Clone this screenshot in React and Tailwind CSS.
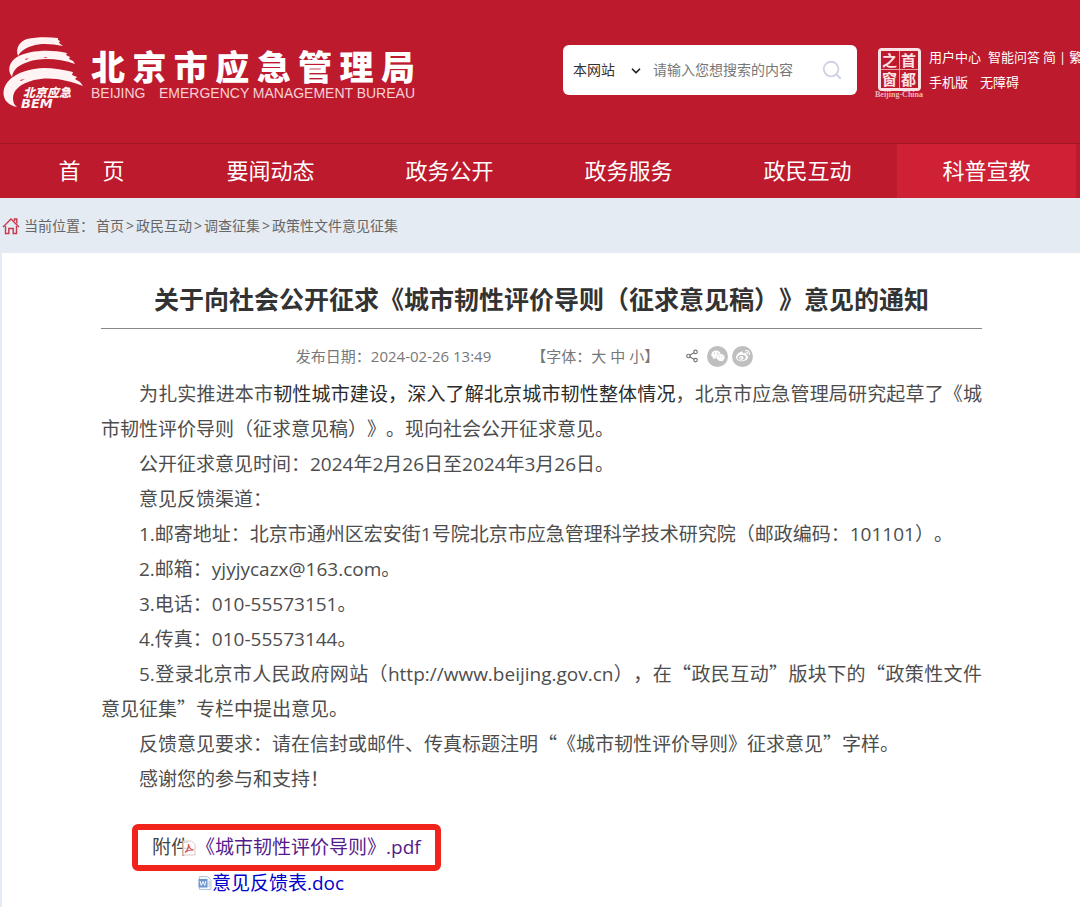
import { ChevronDown, Search, Share2 } from 'lucide-react';
import { FaWeibo, FaWeixin } from 'react-icons/fa6';

const siteName = ['北', '京', '市', '应', '急', '管', '理', '局'];

const navItems = [
  { label: '首\u3000页' },
  { label: '要闻动态' },
  { label: '政务公开' },
  { label: '政务服务' },
  { label: '政民互动' },
  { label: '科普宣教', active: true },
];

const crumbs = ['首页', '政民互动', '调查征集', '政策性文件意见征集'];

function BureauEmblem() {
  return (
    <svg className="h-[74px] w-20 shrink-0" viewBox="0 0 80 74" fill="#fff3f3" aria-hidden="true">
      {/* Temple of Heaven brush strokes */}
      <path d="M15 19C12 11 17 4 24 2c9-2 21-2 31-1l0 2 2 1-1 2 4 3c-11-2-22-3-31 0-7 2-11 5-14 10z" />
      <path d="M9 40C4 33 6 25 14 20c12-7 33-8 50-4l-1 2 4 2-1 2 4 2 2 3c-15-5-33-7-47-2C15 28 10 33 9 40z" />
      <path d="M14 70C3 68-1 60 1 52c4-13 20-20 39-21 11 0 21 2 30 4l-1 3 5 2-2 2 5 3 3 4c-15-6-33-10-49-6-15 4-21 11-21 18 0 4 1 7 4 9z" />
      <path d="M22 22l4-1-3 2zm20-2l3 1h-4zM17 43l5-1-4 2zm22-1l4 1-5 0z" fill="#bd1a2d" />
      <text x="20" y="60" fontSize="12" fontWeight="900" fontStyle="italic" fontFamily="Noto Sans CJK SC, sans-serif">
        北京应急
      </text>
      <text x="18" y="71" fontSize="13" fontWeight="700" fontStyle="italic" fontFamily="DejaVu Sans, sans-serif">
        BEM
      </text>
    </svg>
  );
}

function CapitalSeal() {
  return (
    <a href="#capital" className="flex w-12 shrink-0 flex-col items-center text-[#fbe3e5]">
      <span className="grid size-[43px] grid-cols-2 grid-rows-2 gap-px rounded-sm border-3 border-[#fbe3e5] bg-[#e9a0a8] font-['Noto_Sans_CJK_SC',sans-serif] text-[15px] leading-4 font-bold">
        {['之', '首', '窗', '都'].map((char) => (
          <span key={char} className="flex items-center justify-center bg-[#bd1a2d]">
            {char}
          </span>
        ))}
      </span>
      <span className="font-['Liberation_Serif',serif] text-[8px] leading-2 font-bold whitespace-nowrap text-[#f0b4ba]">
        Beijing-China
      </span>
    </a>
  );
}

function HomeIcon() {
  return (
    <svg className="mr-1 size-[18px] shrink-0" viewBox="0 0 18 18" fill="none" stroke="#c9384a" strokeWidth="1.4" aria-hidden="true">
      <path d="M1 10L9 2l8 8" />
      <path d="M3.5 9v7.5h3.3v-5h4.4v5h3.3V9" />
      <path d="M12.5 4V2h2.3v4.5" />
    </svg>
  );
}

function PdfIcon() {
  return (
    <svg className="h-4 w-3.5" viewBox="0 0 14 16" fill="none" aria-hidden="true">
      <path d="M1 1h8.5L13 4.500V15H1z" fill="#fff" fillOpacity="0.8" stroke="#d9c6c9" />
      <path d="M3 12.500c2-1.500 3.500-4.500 3.500-8.500.5 4 2 6 5 6-3-.5-5.500 0-8.500 2.500z" stroke="#e0555c" strokeWidth="1.300" />
    </svg>
  );
}

function DocIcon() {
  return (
    <svg className="h-4 w-3.5" viewBox="0 0 14 16" fill="none" aria-hidden="true">
      <path d="M1.500 1.500h8L13 5v9.500H1.500z" fill="#f4f8fd" stroke="#b5c7de" />
      <path d="M.5 4h9v8.500h-9z" fill="#6c94cf" />
      <path d="M2 6l1.300 4.500L5 6.500l1.700 4L8 6" stroke="#fff" />
      <path d="M10.500 7H12m-1.500 2H12m-1.500 2H12" stroke="#9db6d6" />
    </svg>
  );
}

/* Full-width Chinese quotation marks, kept from stretching the line box */
function Quoted({ children }) {
  return (
    <>
      <span className="font-['Noto_Sans_CJK_SC',sans-serif] leading-none">“</span>
      {children}
      <span className="font-['Noto_Sans_CJK_SC',sans-serif] leading-none">”</span>
    </>
  );
}

function SearchBox() {
  return (
    <form className="flex h-[50px] w-[294px] shrink-0 items-center rounded-md bg-white pr-3.5 pl-2.5 text-sm" role="search">
      <div className="relative w-20 shrink-0">
        <select aria-label="搜索范围" className="w-full appearance-none bg-transparent text-[#333] outline-none">
          <option>本网站</option>
        </select>
        <ChevronDown className="pointer-events-none absolute top-1 right-2.5 size-3.5 text-[#222]" strokeWidth={3} />
      </div>
      <input
        type="search"
        aria-label="搜索内容"
        placeholder="请输入您想搜索的内容"
        className="min-w-0 flex-1 bg-transparent outline-none placeholder:text-[#777]"
      />
      <button type="button" aria-label="搜索">
        <Search className="size-[22px] text-[#ced3e4]" />
      </button>
    </form>
  );
}

function Header() {
  return (
    <header className="bg-[#bd1a2d] text-white">
      <div className="flex h-[143px] items-start overflow-hidden">
        <a href="#home" className="mt-[37px] ml-[3px] flex shrink-0 gap-2" aria-label="北京市应急管理局">
          <BureauEmblem />
          <span className="mt-2.5 w-[324px]">
            <span className="flex justify-between font-['Noto_Sans_CJK_SC',sans-serif] text-[34px] leading-[38px] font-black">
              {siteName.map((char) => (
                <span key={char}>{char}</span>
              ))}
            </span>
            <span className="flex justify-between font-['Liberation_Sans',sans-serif] text-sm leading-4 text-[#f9d0d4]">
              <span className="mr-2.5">BEIJING</span>
              <span>EMERGENCY</span>
              <span>MANAGEMENT</span>
              <span>BUREAU</span>
            </span>
          </span>
        </a>
        <div className="mt-[45px] ml-auto flex shrink-0 pl-4">
          <SearchBox />
          <div className="mt-[3px] ml-[18px]">
            <CapitalSeal />
          </div>
          {/* Quick links run past the right edge on narrow windows */}
          <div className="ml-1.5 w-[151px] text-[13px] leading-[25px] whitespace-nowrap">
            <div className="flex">
              <a href="#user" className="mr-[7px]">用户中心</a>
              <a href="#qa" className="mr-[3px]">智能问答</a>
              <a href="#hans">简</a>
              <span className="mx-[3px]">|</span>
              <a href="#hant">繁</a>
            </div>
            <div className="flex gap-3">
              <a href="#mobile">手机版</a>
              <a href="#accessible">无障碍</a>
            </div>
          </div>
        </div>
      </div>
      <nav className="grid grid-cols-6 border-t border-[#a31626] pr-1 pl-0.5 text-center text-[22px] leading-[52px]" aria-label="主导航">
        {navItems.map((item) => (
          <a key={item.label} href="#nav" className={item.active ? 'bg-[#ce2136] pb-0.5' : 'pb-0.5'}>
            {item.label}
          </a>
        ))}
      </nav>
    </header>
  );
}

function Breadcrumb() {
  return (
    <nav className="flex h-[55px] items-center bg-[#e5ebf3] pl-0.5 text-sm text-[#666]" aria-label="当前位置">
      <HomeIcon />
      <span className="mr-0.5">当前位置：</span>
      <span>
        {crumbs.map((crumb, index) => (
          <span key={crumb}>
            {index > 0 && <span className="mx-0.5">&gt;</span>}
            <a href="#crumb">{crumb}</a>
          </span>
        ))}
      </span>
    </nav>
  );
}

function ArticleMeta() {
  return (
    <div className="flex h-12 items-center justify-center pt-1.5 pr-[34px] text-[15px] text-[#777]">
      <span className="mr-10">发布日期：2024-02-26 13:49</span>
      <span className="mr-[26px]">
        【字体：
        <button type="button">大</button> <button type="button">中</button> <button type="button">小</button>】
      </span>
      <button type="button" aria-label="分享" className="mr-2">
        <Share2 className="size-3.5" />
      </button>
      <button type="button" aria-label="微信" className="mr-1 flex size-[21px] items-center justify-center rounded-full bg-[#bfbfbf] text-white">
        <FaWeixin className="size-3.5" />
      </button>
      <button type="button" aria-label="微博" className="flex size-[21px] items-center justify-center rounded-full bg-[#bfbfbf] text-white">
        <FaWeibo className="size-3.5" />
      </button>
    </div>
  );
}

function Article() {
  return (
    <article className="flex-1 bg-white pt-6 pr-[98px] pl-[99px]">
      <h1 className="border-b border-[#888] pb-2 text-center font-['Noto_Sans_CJK_SC',sans-serif] text-[25px] leading-[43px] font-bold text-[#333]">
        关于向社会公开征求《城市韧性评价导则（征求意见稿）》意见的通知
      </h1>
      <ArticleMeta />
      <div className="text-justify indent-[2em] text-[19px] leading-[35px] text-[#4d4d4d]">
        <p>
          为扎实推进本市<span className="text-[#2b2b2b]">韧性城市建设，深入了解北京城市韧性整体情况</span>
          ，北京市应急管理局研究起草了《城市韧性评价导则（征求意见稿）》。现向社会公开征求意见。
        </p>
        <p>公开征求意见时间：2024年2月26日至2024年3月26日。</p>
        <p>意见反馈渠道：</p>
        <p>1.邮寄地址：北京市通州区宏安街1号院北京市应急管理科学技术研究院（邮政编码：101101）。</p>
        <p>2.邮箱：yjyjycazx@163.com。</p>
        <p>3.电话：010-55573151。</p>
        <p>4.传真：010-55573144。</p>
        <p>
          5.登录北京市人民政府网站（http://www.beijing.gov.cn），在<Quoted>政民互动</Quoted>版块下的
          <Quoted>政策性文件意见征集</Quoted>专栏中提出意见。
        </p>
        <p>
          反馈意见要求：请在信封或邮件、传真标题注明<Quoted>《城市韧性评价导则》征求意见</Quoted>字样。
        </p>
        <p>感谢您的参与和支持！</p>
      </div>

      {/* Attachments */}
      <div className="mt-[27px] pl-[31px] text-[19px]">
        <div className="flex w-fit items-center rounded-md border-6 border-[#f1241c] px-3.5 leading-[35px] text-[#444]">
          <span>附件</span>
          <a href="#pdf" className="-ml-2 flex items-center text-[#551a8b]">
            <PdfIcon />
            <span>《城市韧性评价导则》.pdf</span>
          </a>
        </div>
        <a href="#doc" className="ml-[66px] flex w-fit items-center leading-6 text-[#0000cc]">
          <DocIcon />
          意见反馈表.doc
        </a>
      </div>
    </article>
  );
}

function App() {
  return (
    <div
      lang="zh-CN"
      className="flex min-h-screen flex-col overflow-hidden bg-white font-['Open_Sans','Noto_Sans_CJK_SC',sans-serif] [text-spacing-trim:space-all]"
    >
      <Header />
      <Breadcrumb />
      <main className="flex flex-1 flex-col border-l-2 border-[#e5ebf3]">
        <Article />
      </main>
    </div>
  );
}

export default App;
